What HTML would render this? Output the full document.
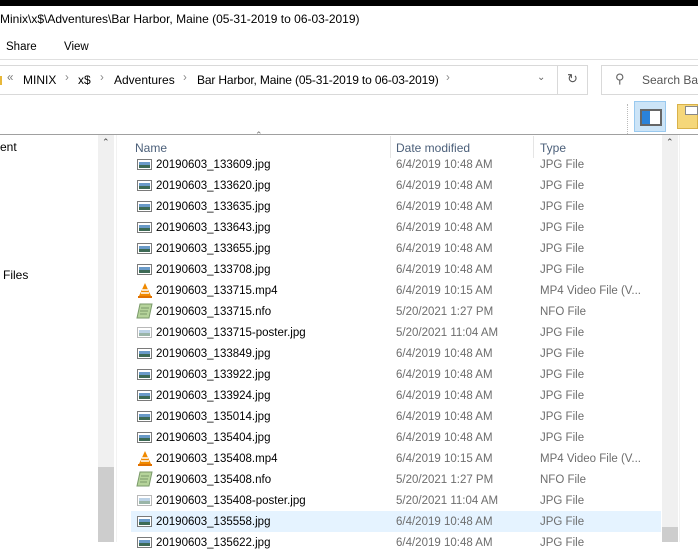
<!DOCTYPE html>
<html><head><meta charset="utf-8"><style>
*{margin:0;padding:0;box-sizing:border-box}
body{width:698px;height:542px;overflow:hidden;background:#fff;font-family:"Liberation Sans",sans-serif;font-size:11.5px;color:#000;position:relative}
.a{position:absolute;white-space:nowrap}
.row{position:absolute;left:131px;width:530px;height:21px}
.row .n{position:absolute;left:25px;top:5px}
.row .d{position:absolute;left:265px;top:5px;color:#6d6d6d}
.row .t{position:absolute;left:409px;top:5px;color:#6d6d6d}
.ic{position:absolute;left:6px;top:5px;width:15px;height:11px;border:1px solid #7a7a7a;background:linear-gradient(#fff 0 20%,#6a9ac8 20% 55%,#3d6a55 55% 100%);box-shadow:inset 0 0 0 1px #fff}
.ic.p{border-color:#b8b8b8;background:linear-gradient(#fff 0 20%,#bcd2e6 20% 55%,#9ab5a8 55% 100%)}
</style></head><body>
<div class="a" style="left:0;top:0;width:698px;height:6px;background:#000"></div>
<div class="a" style="left:0;top:12px;font-size:12px">Minix\x$\Adventures\Bar Harbor, Maine (05-31-2019 to 06-03-2019)</div>
<div class="a" style="left:6px;top:41px;font-size:11.5px">Share</div>
<div class="a" style="left:64px;top:41px;font-size:11.5px">View</div>
<div class="a" style="left:0;top:59px;width:698px;height:1px;background:#e0e0e0"></div>
<div class="a" style="left:-1px;top:65px;width:589px;height:30px;border:1px solid #d9d9d9"></div>
<div class="a" style="left:557px;top:65px;width:1px;height:30px;background:#d9d9d9"></div>
<div class="a" style="left:0;top:76px;width:2px;height:9px;background:#e8b83a"></div>
<div class="a" style="left:7px;top:72px;color:#777">«</div>
<div class="a" style="left:23px;top:73px;font-size:12px">MINIX</div>
<div class="a" style="left:65px;top:72px;color:#888">›</div>
<div class="a" style="left:78px;top:73px;font-size:12px">x$</div>
<div class="a" style="left:100px;top:72px;color:#888">›</div>
<div class="a" style="left:114px;top:73px;font-size:12px">Adventures</div>
<div class="a" style="left:183px;top:72px;color:#888">›</div>
<div class="a" style="left:197px;top:73px;font-size:12px;letter-spacing:-0.15px">Bar Harbor, Maine (05-31-2019 to 06-03-2019)</div>
<div class="a" style="left:446px;top:72px;color:#888">›</div>
<div class="a" style="left:537px;top:72px;color:#666;font-size:10px">⌄</div>
<div class="a" style="left:567px;top:71px;color:#555;font-size:13px">↻</div>
<div class="a" style="left:601px;top:65px;width:110px;height:30px;border:1px solid #d9d9d9"></div>
<div class="a" style="left:615px;top:71px;color:#666;font-size:13px">⚲</div>
<div class="a" style="left:642px;top:73px;color:#555;font-size:12px">Search Bar</div>
<div class="a" style="left:627px;top:104px;height:30px;border-left:1px dotted #bbb"></div>
<div class="a" style="left:634px;top:101px;width:32px;height:31px;background:#cce4f7;border:1px solid #99c9ef"></div>
<div class="a" style="left:640px;top:109px;width:22px;height:17px;border:2px solid #666;background:#fff"></div>
<div class="a" style="left:642px;top:111px;width:8px;height:13px;background:#2b82d9"></div>
<div class="a" style="left:677px;top:104px;width:21px;height:25px;background:#f5d77a;border:1px solid #d9b24a"></div>
<div class="a" style="left:685px;top:106px;width:13px;height:9px;background:#fff;border:1px solid #888"></div>
<div class="a" style="left:0;top:134px;width:698px;height:1px;background:#a0a0a0"></div>
<div class="a" style="left:0;top:140px;font-size:12px">ent</div>
<div class="a" style="left:3px;top:268px;font-size:12px">Files</div>
<div class="a" style="left:98px;top:135px;width:16px;height:407px;background:#f0f0f0"></div>
<div class="a" style="left:98px;top:467px;width:16px;height:75px;background:#cdcdcd"></div>
<div class="a" style="left:102px;top:137px;font-size:9px;color:#444">⌃</div>
<div class="a" style="left:116px;top:135px;width:1px;height:407px;background:#f2f2f2"></div>
<div class="a" style="left:255px;top:130px;font-size:9px;color:#777">⌃</div>
<div class="a" style="left:135px;top:141px;color:#4c607a;font-size:12px">Name</div>
<div class="a" style="left:390px;top:136px;width:1px;height:22px;background:#e5e5e5"></div>
<div class="a" style="left:396px;top:141px;color:#4c607a;font-size:12px">Date modified</div>
<div class="a" style="left:533px;top:136px;width:1px;height:22px;background:#e5e5e5"></div>
<div class="a" style="left:540px;top:141px;color:#4c607a;font-size:12px">Type</div>
<div class="a" style="left:662px;top:135px;width:16px;height:407px;background:#f0f0f0"></div>
<div class="a" style="left:662px;top:527px;width:16px;height:15px;background:#cdcdcd"></div>
<div class="a" style="left:666px;top:137px;font-size:9px;color:#444">⌃</div>
<div class="a" style="left:679px;top:135px;width:1px;height:407px;background:#f2f2f2"></div>
<div class="row" style="top:154px"><div class="ic"></div><div class="n">20190603_133609.jpg</div><div class="d">6/4/2019 10:48 AM</div><div class="t">JPG File</div></div>
<div class="row" style="top:175px"><div class="ic"></div><div class="n">20190603_133620.jpg</div><div class="d">6/4/2019 10:48 AM</div><div class="t">JPG File</div></div>
<div class="row" style="top:196px"><div class="ic"></div><div class="n">20190603_133635.jpg</div><div class="d">6/4/2019 10:48 AM</div><div class="t">JPG File</div></div>
<div class="row" style="top:217px"><div class="ic"></div><div class="n">20190603_133643.jpg</div><div class="d">6/4/2019 10:48 AM</div><div class="t">JPG File</div></div>
<div class="row" style="top:238px"><div class="ic"></div><div class="n">20190603_133655.jpg</div><div class="d">6/4/2019 10:48 AM</div><div class="t">JPG File</div></div>
<div class="row" style="top:259px"><div class="ic"></div><div class="n">20190603_133708.jpg</div><div class="d">6/4/2019 10:48 AM</div><div class="t">JPG File</div></div>
<div class="row" style="top:280px"><svg style="position:absolute;left:6px;top:2px" width="16" height="16"><path d="M8 1L2 14h12z" fill="#f08a00"/><path d="M5 8h6M4 11h8" stroke="#fff" stroke-width="1.5"/><rect x="1" y="14" width="14" height="2" fill="#e07000"/></svg><div class="n">20190603_133715.mp4</div><div class="d">6/4/2019 10:15 AM</div><div class="t">MP4 Video File (V...</div></div>
<div class="row" style="top:301px"><svg style="position:absolute;left:5px;top:2px" width="17" height="16"><path d="M4 1h12l-3 14H1z" fill="#b5d39a" stroke="#7a9a6a"/><path d="M5 5h8M4 8h8M4 11h7" stroke="#7a9a6a"/></svg><div class="n">20190603_133715.nfo</div><div class="d">5/20/2021 1:27 PM</div><div class="t">NFO File</div></div>
<div class="row" style="top:322px"><div class="ic p"></div><div class="n">20190603_133715-poster.jpg</div><div class="d">5/20/2021 11:04 AM</div><div class="t">JPG File</div></div>
<div class="row" style="top:343px"><div class="ic"></div><div class="n">20190603_133849.jpg</div><div class="d">6/4/2019 10:48 AM</div><div class="t">JPG File</div></div>
<div class="row" style="top:364px"><div class="ic"></div><div class="n">20190603_133922.jpg</div><div class="d">6/4/2019 10:48 AM</div><div class="t">JPG File</div></div>
<div class="row" style="top:385px"><div class="ic"></div><div class="n">20190603_133924.jpg</div><div class="d">6/4/2019 10:48 AM</div><div class="t">JPG File</div></div>
<div class="row" style="top:406px"><div class="ic"></div><div class="n">20190603_135014.jpg</div><div class="d">6/4/2019 10:48 AM</div><div class="t">JPG File</div></div>
<div class="row" style="top:427px"><div class="ic"></div><div class="n">20190603_135404.jpg</div><div class="d">6/4/2019 10:48 AM</div><div class="t">JPG File</div></div>
<div class="row" style="top:448px"><svg style="position:absolute;left:6px;top:2px" width="16" height="16"><path d="M8 1L2 14h12z" fill="#f08a00"/><path d="M5 8h6M4 11h8" stroke="#fff" stroke-width="1.5"/><rect x="1" y="14" width="14" height="2" fill="#e07000"/></svg><div class="n">20190603_135408.mp4</div><div class="d">6/4/2019 10:15 AM</div><div class="t">MP4 Video File (V...</div></div>
<div class="row" style="top:469px"><svg style="position:absolute;left:5px;top:2px" width="17" height="16"><path d="M4 1h12l-3 14H1z" fill="#b5d39a" stroke="#7a9a6a"/><path d="M5 5h8M4 8h8M4 11h7" stroke="#7a9a6a"/></svg><div class="n">20190603_135408.nfo</div><div class="d">5/20/2021 1:27 PM</div><div class="t">NFO File</div></div>
<div class="row" style="top:490px"><div class="ic p"></div><div class="n">20190603_135408-poster.jpg</div><div class="d">5/20/2021 11:04 AM</div><div class="t">JPG File</div></div>
<div class="row" style="top:511px;background:#e5f3ff"><div class="ic"></div><div class="n">20190603_135558.jpg</div><div class="d">6/4/2019 10:48 AM</div><div class="t">JPG File</div></div>
<div class="row" style="top:532px"><div class="ic"></div><div class="n">20190603_135622.jpg</div><div class="d">6/4/2019 10:48 AM</div><div class="t">JPG File</div></div>
</body></html>
